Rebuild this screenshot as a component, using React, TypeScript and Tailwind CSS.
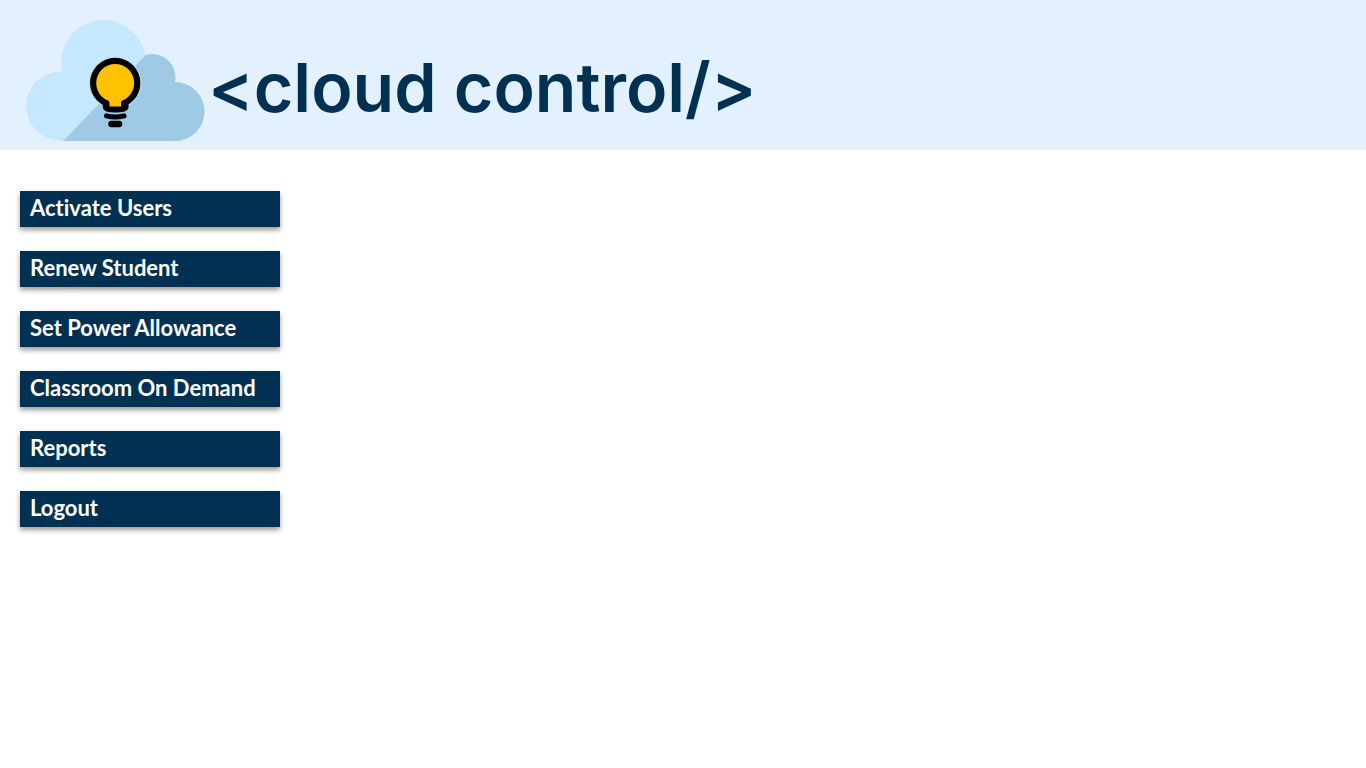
const menuItems = [
  { label: "Activate Users", href: "#activate-users" },
  { label: "Renew Student", href: "#renew-student" },
  { label: "Set Power Allowance", href: "#set-power-allowance" },
  { label: "Classroom On Demand", href: "#classroom-on-demand" },
  { label: "Reports", href: "#reports" },
  { label: "Logout", href: "#logout" },
];

function CloudLogo() {
  return (
    <svg viewBox="0 0 208 150" className="h-[150px] w-[208px] shrink-0" aria-hidden="true">
      <defs>
        <clipPath id="cloud-shade">
          <path d="M63.500 141 L147 54 L210 40 L210 150 L63 150 Z" />
        </clipPath>
        <g id="cloud-shape">
          <circle cx="60.500" cy="106" r="34.500" />
          <circle cx="103.500" cy="62.500" r="42.500" />
          <circle cx="152" cy="77.500" r="23.500" />
          <circle cx="175" cy="111.500" r="29.500" />
          <path d="M60 72 L104 60 L152 77 L175 111 V141 H60 Z" />
        </g>
      </defs>
      <use href="#cloud-shape" fill="#c5e8ff" />
      <g clipPath="url(#cloud-shade)">
        <use href="#cloud-shape" fill="#9ecae5" />
      </g>
      <circle cx="115.200" cy="83" r="26.300" fill="#b7e1f8" />
      <path
        d="M102 98 H128.500 V108 Q127 112.500 115.500 112.500 Q103.500 112.500 103 108 Z"
        fill="#000"
      />
      <circle cx="115.200" cy="83" r="25.200" fill="#000" />
      <circle cx="115.200" cy="83" r="19" fill="#ffc200" />
      <path d="M105 97 Q109.500 100 109.500 103 V106.500 H121 V103 Q121 100 125.500 97 Z" fill="#ffc200" />
      <path d="M106.500 115.800 Q115 118.300 124 115.800" fill="none" stroke="#000" strokeWidth="5" strokeLinecap="round" />
      <path d="M111.500 124 H119" stroke="#000" strokeWidth="6.500" strokeLinecap="round" />
    </svg>
  );
}

export default function App() {
  return (
    <div className="min-h-screen bg-white font-['Lato',sans-serif]">
      <header className="flex items-center bg-[#e3f1ff]">
        <CloudLogo />
        <h1 className="pt-6 font-['Inter',sans-serif] text-[68px] leading-[80px] font-semibold whitespace-nowrap text-[#003153]">
          &lt;cloud control/&gt;
        </h1>
      </header>
      <nav aria-label="Main menu" className="px-5 pt-[41px] pb-6">
        <ul className="flex w-[260px] flex-col gap-6">
          {menuItems.map((item) => (
            <li key={item.href}>
              <a
                href={item.href}
                className="block bg-[#003153] px-2.5 pt-[5px] pb-[7px] text-[22px] leading-6 font-bold whitespace-nowrap text-white shadow-[0_3px_5px_rgba(0,0,0,0.4)] [font-variant-ligatures:none]"
              >
                {item.label}
              </a>
            </li>
          ))}
        </ul>
      </nav>
    </div>
  );
}
